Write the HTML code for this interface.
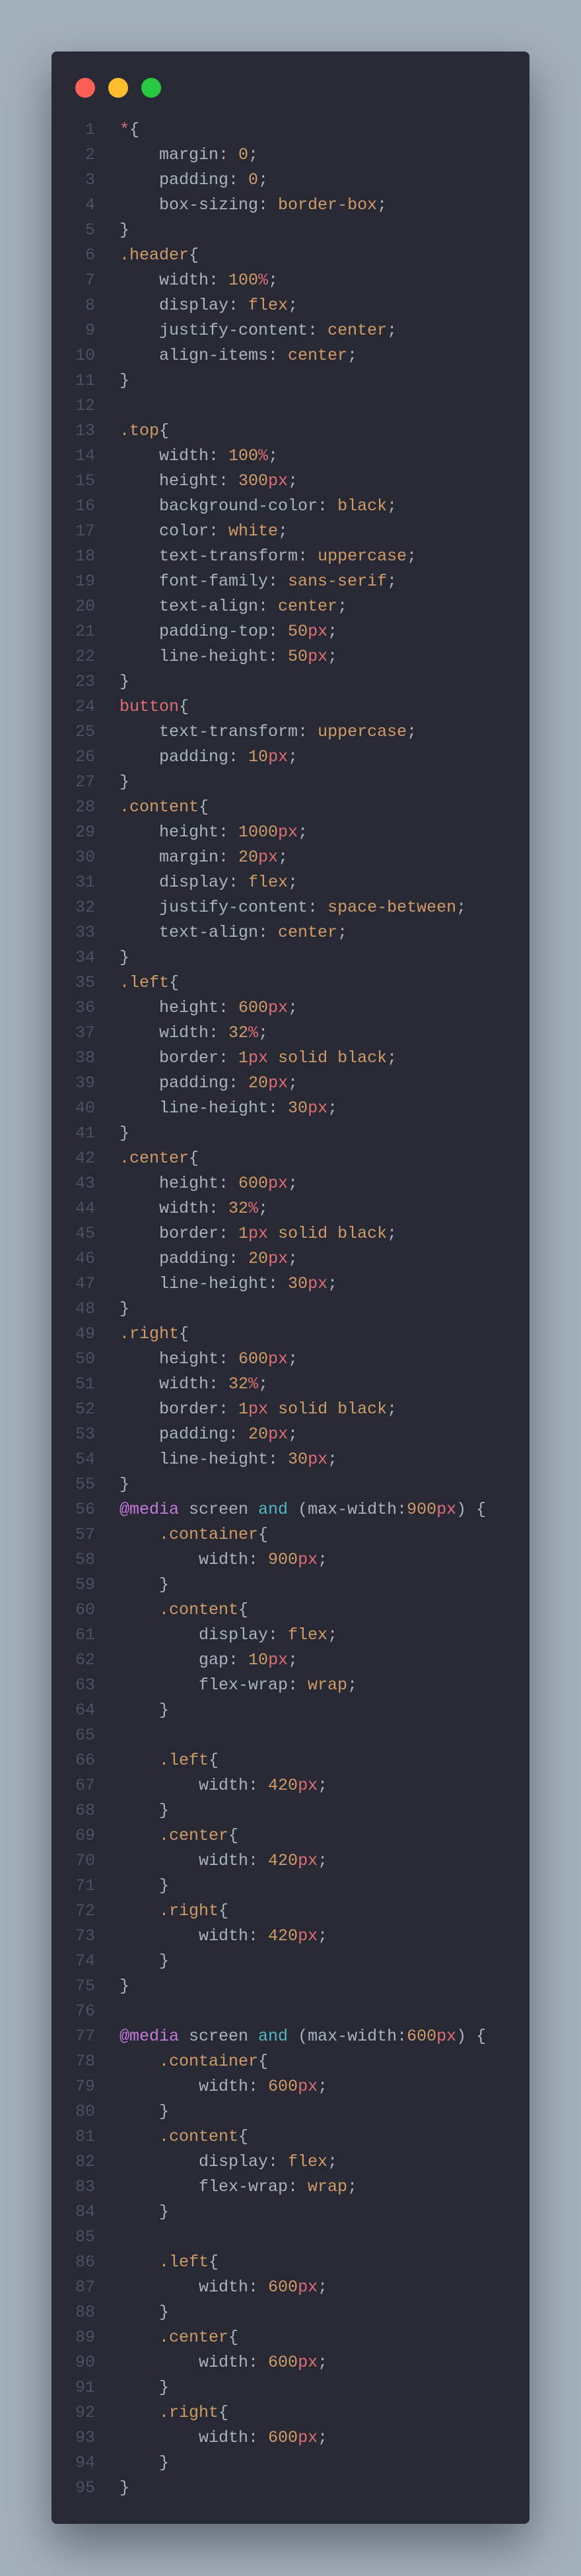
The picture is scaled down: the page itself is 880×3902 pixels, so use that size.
<!DOCTYPE html>
<html><head><meta charset="utf-8">
<style>
html,body{margin:0;padding:0;}
body{width:880px;height:3902px;background:#a4b0bc;position:relative;overflow:hidden;font-family:"Liberation Mono",monospace;}
.card{position:absolute;left:78px;top:78px;width:724px;height:3745px;background:#272a34;border-radius:8px;box-shadow:0 30px 70px rgba(40,45,55,0.55);}
.dot{position:absolute;top:40px;width:30px;height:30px;border-radius:50%;}
pre{position:absolute;left:0;top:100px;margin:0;font-family:"Liberation Mono",monospace;font-size:25px;line-height:38px;color:#abb2bf;}
.ln{display:inline-block;width:66px;text-align:right;color:#4b5263;margin-right:37px;}
.o{color:#d19a66}.r{color:#e06c75}.p{color:#c678dd}.c{color:#56b6c2}
</style></head><body>
<div class="card">
<div class="dot" style="left:36px;background:#ff5f57"></div>
<div class="dot" style="left:86px;background:#febc2e"></div>
<div class="dot" style="left:136px;background:#28c840"></div>
<pre><span class="ln">1</span><span class="r">*</span>{
<span class="ln">2</span>    margin: <span class="o">0</span>;
<span class="ln">3</span>    padding: <span class="o">0</span>;
<span class="ln">4</span>    box-sizing: <span class="o">border-box</span>;
<span class="ln">5</span>}
<span class="ln">6</span><span class="o">.header</span>{
<span class="ln">7</span>    width: <span class="o">100</span><span class="r">%</span>;
<span class="ln">8</span>    display: <span class="o">flex</span>;
<span class="ln">9</span>    justify-content: <span class="o">center</span>;
<span class="ln">10</span>    align-items: <span class="o">center</span>;
<span class="ln">11</span>}
<span class="ln">12</span>
<span class="ln">13</span><span class="o">.top</span>{
<span class="ln">14</span>    width: <span class="o">100</span><span class="r">%</span>;
<span class="ln">15</span>    height: <span class="o">300</span><span class="r">px</span>;
<span class="ln">16</span>    background-color: <span class="o">black</span>;
<span class="ln">17</span>    color: <span class="o">white</span>;
<span class="ln">18</span>    text-transform: <span class="o">uppercase</span>;
<span class="ln">19</span>    font-family: <span class="o">sans-serif</span>;
<span class="ln">20</span>    text-align: <span class="o">center</span>;
<span class="ln">21</span>    padding-top: <span class="o">50</span><span class="r">px</span>;
<span class="ln">22</span>    line-height: <span class="o">50</span><span class="r">px</span>;
<span class="ln">23</span>}
<span class="ln">24</span><span class="r">button</span>{
<span class="ln">25</span>    text-transform: <span class="o">uppercase</span>;
<span class="ln">26</span>    padding: <span class="o">10</span><span class="r">px</span>;
<span class="ln">27</span>}
<span class="ln">28</span><span class="o">.content</span>{
<span class="ln">29</span>    height: <span class="o">1000</span><span class="r">px</span>;
<span class="ln">30</span>    margin: <span class="o">20</span><span class="r">px</span>;
<span class="ln">31</span>    display: <span class="o">flex</span>;
<span class="ln">32</span>    justify-content: <span class="o">space-between</span>;
<span class="ln">33</span>    text-align: <span class="o">center</span>;
<span class="ln">34</span>}
<span class="ln">35</span><span class="o">.left</span>{
<span class="ln">36</span>    height: <span class="o">600</span><span class="r">px</span>;
<span class="ln">37</span>    width: <span class="o">32</span><span class="r">%</span>;
<span class="ln">38</span>    border: <span class="o">1</span><span class="r">px</span> <span class="o">solid black</span>;
<span class="ln">39</span>    padding: <span class="o">20</span><span class="r">px</span>;
<span class="ln">40</span>    line-height: <span class="o">30</span><span class="r">px</span>;
<span class="ln">41</span>}
<span class="ln">42</span><span class="o">.center</span>{
<span class="ln">43</span>    height: <span class="o">600</span><span class="r">px</span>;
<span class="ln">44</span>    width: <span class="o">32</span><span class="r">%</span>;
<span class="ln">45</span>    border: <span class="o">1</span><span class="r">px</span> <span class="o">solid black</span>;
<span class="ln">46</span>    padding: <span class="o">20</span><span class="r">px</span>;
<span class="ln">47</span>    line-height: <span class="o">30</span><span class="r">px</span>;
<span class="ln">48</span>}
<span class="ln">49</span><span class="o">.right</span>{
<span class="ln">50</span>    height: <span class="o">600</span><span class="r">px</span>;
<span class="ln">51</span>    width: <span class="o">32</span><span class="r">%</span>;
<span class="ln">52</span>    border: <span class="o">1</span><span class="r">px</span> <span class="o">solid black</span>;
<span class="ln">53</span>    padding: <span class="o">20</span><span class="r">px</span>;
<span class="ln">54</span>    line-height: <span class="o">30</span><span class="r">px</span>;
<span class="ln">55</span>}
<span class="ln">56</span><span class="p">@media</span> screen <span class="c">and</span> (max-width:<span class="o">900</span><span class="r">px</span>) {
<span class="ln">57</span>    <span class="o">.container</span>{
<span class="ln">58</span>        width: <span class="o">900</span><span class="r">px</span>;
<span class="ln">59</span>    }
<span class="ln">60</span>    <span class="o">.content</span>{
<span class="ln">61</span>        display: <span class="o">flex</span>;
<span class="ln">62</span>        gap: <span class="o">10</span><span class="r">px</span>;
<span class="ln">63</span>        flex-wrap: <span class="o">wrap</span>;
<span class="ln">64</span>    }
<span class="ln">65</span>
<span class="ln">66</span>    <span class="o">.left</span>{
<span class="ln">67</span>        width: <span class="o">420</span><span class="r">px</span>;
<span class="ln">68</span>    }
<span class="ln">69</span>    <span class="o">.center</span>{
<span class="ln">70</span>        width: <span class="o">420</span><span class="r">px</span>;
<span class="ln">71</span>    }
<span class="ln">72</span>    <span class="o">.right</span>{
<span class="ln">73</span>        width: <span class="o">420</span><span class="r">px</span>;
<span class="ln">74</span>    }
<span class="ln">75</span>}
<span class="ln">76</span>
<span class="ln">77</span><span class="p">@media</span> screen <span class="c">and</span> (max-width:<span class="o">600</span><span class="r">px</span>) {
<span class="ln">78</span>    <span class="o">.container</span>{
<span class="ln">79</span>        width: <span class="o">600</span><span class="r">px</span>;
<span class="ln">80</span>    }
<span class="ln">81</span>    <span class="o">.content</span>{
<span class="ln">82</span>        display: <span class="o">flex</span>;
<span class="ln">83</span>        flex-wrap: <span class="o">wrap</span>;
<span class="ln">84</span>    }
<span class="ln">85</span>
<span class="ln">86</span>    <span class="o">.left</span>{
<span class="ln">87</span>        width: <span class="o">600</span><span class="r">px</span>;
<span class="ln">88</span>    }
<span class="ln">89</span>    <span class="o">.center</span>{
<span class="ln">90</span>        width: <span class="o">600</span><span class="r">px</span>;
<span class="ln">91</span>    }
<span class="ln">92</span>    <span class="o">.right</span>{
<span class="ln">93</span>        width: <span class="o">600</span><span class="r">px</span>;
<span class="ln">94</span>    }
<span class="ln">95</span>}</pre>
</div>
</body></html>
